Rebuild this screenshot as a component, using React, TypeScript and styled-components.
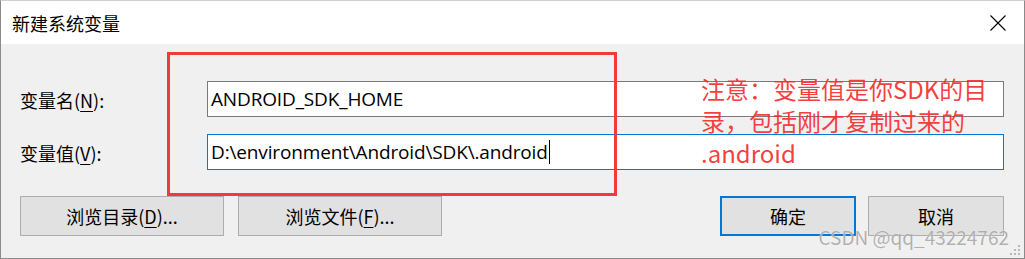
import React from "react";
import styled, { createGlobalStyle } from "styled-components";

const GlobalStyle = createGlobalStyle`
  html, body {
    margin: 0;
    padding: 0;
    background: #f0f0f0;
  }
  * {
    box-sizing: border-box;
  }
`;

const uiFont = `"Open Sans", "Noto Sans CJK SC", sans-serif`;

const Window = styled.div`
  position: relative;
  width: 1025px;
  height: 259px;
  border: 1px solid #8a8a8a;
  border-top-color: #d0d0d0;
  background: #f0f0f0;
  font-family: ${uiFont};
  color: #000;
  overflow: hidden;
`;

const TitleBar = styled.div`
  height: 43px;
  background: #fff;
  display: flex;
  align-items: center;
  justify-content: space-between;
  padding: 0 10px 0 11px;
`;

const TitleText = styled.div`
  font-size: 18px;
  font-family: "Noto Sans CJK SC", sans-serif;
`;

const CloseBox = styled.div`
  width: 30px;
  height: 30px;
  display: flex;
  align-items: center;
  justify-content: center;
  margin-right: 1px;
`;

const Body = styled.div`
  padding: 37px 20px 0 19px;
  display: flex;
  flex-direction: column;
`;

const Form = styled.div`
  display: grid;
  grid-template-columns: 187px 797px;
  row-gap: 17px;
  align-items: center;
`;

const Label = styled.div`
  font-size: 18px;
  font-family: "Noto Sans CJK SC", sans-serif;
  padding-top: 1px;
  u {
    text-decoration-thickness: 1px;
    text-underline-offset: 3px;
  }
`;

const Field = styled.div<{ $focused?: boolean }>`
  height: 36px;
  background: #fff;
  border: 1px solid ${({ $focused }) => ($focused ? "#0078d7" : "#7a7a7a")};
  display: flex;
  align-items: center;
  padding: 0 0 0 3px;
  font-size: 19px;
  letter-spacing: -0.15px;
  font-family: ${uiFont};
  white-space: nowrap;
`;

const Caret = styled.span`
  display: inline-block;
  width: 1px;
  height: 24px;
  background: #000;
  margin-left: 1px;
`;

const ButtonRow = styled.div`
  display: flex;
  align-items: center;
  margin-top: 26px;
  gap: 14px;
`;

const Spacer = styled.div`
  flex: 1;
`;

const Button = styled.div<{ $w: number; $primary?: boolean }>`
  width: ${({ $w }) => $w}px;
  height: 40px;
  background: #e1e1e1;
  border: ${({ $primary }) => ($primary ? "2px solid #0078d7" : "1px solid #adadad")};
  display: flex;
  align-items: center;
  justify-content: center;
  font-size: 18px;
  font-family: "Noto Sans CJK SC", sans-serif;
  u {
    text-decoration-thickness: 1px;
    text-underline-offset: 3px;
  }
`;

const RightButtons = styled.div`
  display: flex;
  gap: 12px;
`;

const Highlight = styled.div`
  position: absolute;
  left: 166px;
  top: 51px;
  width: 450px;
  height: 144px;
  border: 3px solid #f23a3a;
  pointer-events: none;
`;

const Note = styled.div`
  position: absolute;
  left: 700px;
  top: 72px;
  font-size: 24px;
  line-height: 32px;
  color: rgba(245, 45, 45, 0.92);
  font-family: "Noto Sans CJK SC", sans-serif;
  white-space: nowrap;
`;

const Watermark = styled.div`
  position: absolute;
  right: 15px;
  bottom: 8px;
  font-size: 19px;
  font-family: "Noto Sans CJK SC", sans-serif;
  color: rgba(150, 150, 150, 0.75);
  text-shadow: 0 0 1px rgba(255, 255, 255, 0.9);
  white-space: nowrap;
`;

const Grip = styled.svg`
  position: absolute;
  right: 3px;
  bottom: 2px;
`;

const CloseIcon = () => (
  <svg width="16" height="16" viewBox="0 0 16 16">
    <path d="M0.5 0.5 L15.5 15.5 M15.5 0.5 L0.5 15.5" stroke="#000" strokeWidth="1.1" fill="none" />
  </svg>
);

const noteLines = ["注意：变量值是你SDK的目", "录，包括刚才复制过来的", ".android"];

export default function App() {
  return (
    <>
      <GlobalStyle />
      <Window>
        <TitleBar>
          <TitleText>新建系统变量</TitleText>
          <CloseBox>
            <CloseIcon />
          </CloseBox>
        </TitleBar>
        <Body>
          <Form>
            <Label>
              变量名(<u>N</u>):
            </Label>
            <Field>ANDROID_SDK_HOME</Field>
            <Label>
              变量值(<u>V</u>):
            </Label>
            <Field $focused>
              D:\environment\Android\SDK\.android
              <Caret />
            </Field>
          </Form>
          <ButtonRow>
            <Button $w={204}>
              浏览目录(<u>D</u>)...
            </Button>
            <Button $w={204}>
              浏览文件(<u>F</u>)...
            </Button>
            <Spacer />
            <RightButtons>
              <Button $w={136} $primary>
                确定
              </Button>
              <Button $w={136}>取消</Button>
            </RightButtons>
          </ButtonRow>
        </Body>
        <Highlight />
        <Note>
          {noteLines.map((line) => (
            <div key={line}>{line}</div>
          ))}
        </Note>
        <Watermark>CSDN @qq_43224762</Watermark>
        <Grip width="12" height="12" viewBox="0 0 12 12">
          {[
            [9, 1],
            [9, 5],
            [5, 5],
            [9, 9],
            [5, 9],
            [1, 9],
          ].map(([x, y]) => (
            <rect key={`${x}-${y}`} x={x} y={y} width="2" height="2" fill="#b8b8b8" />
          ))}
        </Grip>
      </Window>
    </>
  );
}
